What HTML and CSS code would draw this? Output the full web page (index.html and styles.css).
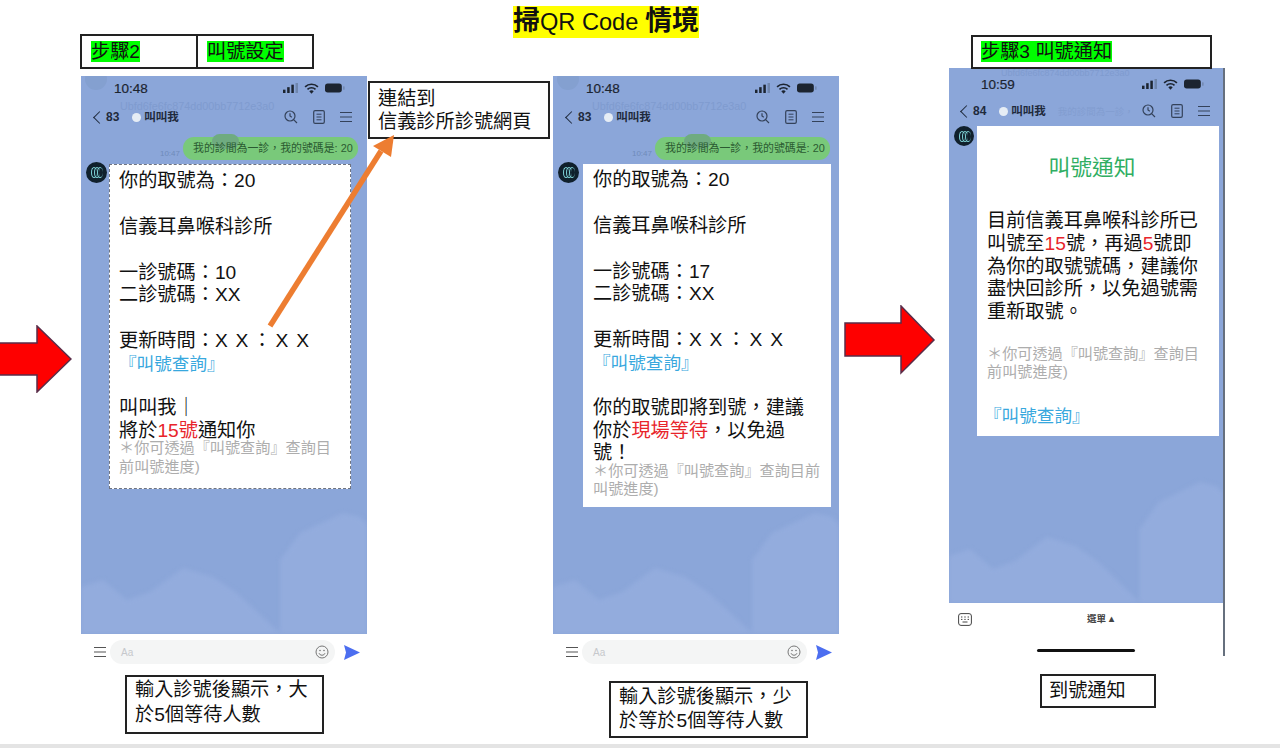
FILE: index.html
```html
<!DOCTYPE html>
<html lang="zh-Hant">
<head>
  <meta charset="UTF-8">
  <meta name="viewport" content="width=device-width, initial-scale=1.0">
  <title>掃QR Code 情境</title>
  <link rel="stylesheet" href="styles.css">
</head>
<body>
  <svg class="icon-defs" aria-hidden="true">
    <symbol id="signal" viewBox="0 0 18 12"><rect x="0" y="8" width="3" height="4" fill="#1c2430"/><rect x="5" y="5" width="3" height="7" fill="#1c2430"/><rect x="10" y="2" width="3" height="10" fill="#1c2430"/><rect x="15" y="0" width="3" height="12" fill="#6f86ad"/></symbol>
    <symbol id="wifi" viewBox="0 0 16 12"><path d="M1 4.2a10 10 0 0 1 14 0M3.6 6.9a6.4 6.4 0 0 1 8.8 0" fill="none" stroke="#1c2430" stroke-width="1.8"/><path d="M8 11.6 5.6 9a3.4 3.4 0 0 1 4.8 0z" fill="#1c2430"/></symbol>
    <symbol id="battery" viewBox="0 0 22 11"><rect x="0" y="0.5" width="18.5" height="10" rx="3" fill="#1c2430"/><rect x="20" y="3.5" width="1.5" height="4" rx="0.7" fill="#6f86ad"/></symbol>
    <symbol id="search" viewBox="0 0 14 14"><circle cx="6" cy="6" r="5" fill="none" stroke="#34425a" stroke-width="1.2"/><path d="M9.6 9.6 13 13M6 3.2V6l1.8 1.2" fill="none" stroke="#34425a" stroke-width="1.2"/></symbol>
    <symbol id="note" viewBox="0 0 12 14"><rect x="0.7" y="0.7" width="10.6" height="12.6" rx="1.4" fill="none" stroke="#34425a" stroke-width="1.2"/><path d="M3.5 4.2h5M3.5 7h5M3.5 9.8h5" stroke="#34425a" stroke-width="1"/></symbol>
    <symbol id="menu" viewBox="0 0 12 12"><path d="M0 1.5h12M0 6h12M0 10.5h12" stroke="#34425a" stroke-width="1.1"/></symbol>
    <symbol id="menu-dark" viewBox="0 0 12 12"><path d="M0 1.5h12M0 6h12M0 10.5h12" stroke="#555" stroke-width="1.2"/></symbol>
    <symbol id="smile" viewBox="0 0 14 14"><circle cx="7" cy="7" r="6" fill="none" stroke="#777" stroke-width="1"/><circle cx="5" cy="5.5" r="0.8" fill="#777"/><circle cx="9" cy="5.5" r="0.8" fill="#777"/><path d="M4 8.2a3.2 3.2 0 0 0 6 0" fill="none" stroke="#777"/></symbol>
    <symbol id="send" viewBox="0 0 16 15"><path d="M0 0 16 7.5 0 15l2-7.5z" fill="#4c6ef0"/></symbol>
    <symbol id="keyboard" viewBox="0 0 14 13"><rect x="0.6" y="0.6" width="12.8" height="11.8" rx="2.4" fill="none" stroke="#444" stroke-width="1"/><path d="M3 4h1.4M6.3 4h1.4M9.6 4H11M3 6.4h1.4M6.3 6.4h1.4M9.6 6.4H11M4.5 9h5" stroke="#444"/></symbol>
    <symbol id="clouds" viewBox="0 0 286 200" preserveAspectRatio="none"><path d="M0 153 22 146 46 166 69 158 102 134 132 143 156 159 200 200H0z" fill="#93acdd"/><path d="M199 126 219 99 262 79 279 83 286 90V200H199z" fill="#93acdd"/></symbol>
  </svg>

  <main class="slide">
    <h1 class="slide-title"><mark class="mark-yellow"><b>掃</b><span class="title-latin">QR Code </span><b>情境</b></mark></h1>

    <div class="step-table">
      <div class="step-cell"><mark class="mark-green">步驟2</mark></div>
      <div class="step-cell"><mark class="mark-green">叫號設定</mark></div>
    </div>

    <!-- 手機 1 -->
    <section class="phone phone-a">
      <div class="screen">
        <svg class="cloud-bg"><use href="#clouds"/></svg>
        <span class="ghost-dot"></span>
        <span class="ghost-id">Ubfd6fe6fc874dd00bb7712e3a0</span>
        <div class="status">
          <span class="clock">10:48</span>
          <span class="status-icons">
            <svg class="ic-signal"><use href="#signal"/></svg>
            <svg class="ic-wifi"><use href="#wifi"/></svg>
            <svg class="ic-battery"><use href="#battery"/></svg>
          </span>
        </div>
        <div class="nav">
          <span class="back"><i class="chev"></i>83</span>
          <span class="room-dot"></span>
          <span class="room">叫叫我</span>
          <span class="nav-icons">
            <svg class="ic-search"><use href="#search"/></svg>
            <svg class="ic-note"><use href="#note"/></svg>
            <svg class="ic-menu"><use href="#menu"/></svg>
          </span>
        </div>
        <div class="bubble-row">
          <span class="sent-time">10:47</span>
          <span class="bubble"><i class="bubble-ghost"></i>我的診間為一診，我的號碼是: 20</span>
        </div>
        <div class="chat-row">
          <span class="avatar"><i></i><i></i><i></i></span>
          <div class="card card-dashed">
            <p>你的取號為：20</p>
            <p>信義耳鼻喉科診所</p>
            <p>一診號碼：10<br>二診號碼：XX</p>
            <p>更新時間：<span class="time-blank">X X<span class="time-colon">：</span>X X</span><br><span class="link">『叫號查詢』</span></p>
            <p class="tight">叫叫我｜<br>將於<span class="red">15號</span>通知你</p>
            <p class="note-text">＊你可透過『叫號查詢』查詢目前叫號進度)</p>
          </div>
        </div>
      </div>
      <div class="inputbar">
        <svg class="ic-hamburger"><use href="#menu-dark"/></svg>
        <div class="input-pill"><span>Aa</span><svg class="ic-smile"><use href="#smile"/></svg></div>
        <svg class="ic-send"><use href="#send"/></svg>
      </div>
    </section>

    <!-- 手機 2 -->
    <section class="phone phone-b">
      <div class="screen">
        <svg class="cloud-bg"><use href="#clouds"/></svg>
        <span class="ghost-dot"></span>
        <span class="ghost-id">Ubfd6fe6fc874dd00bb7712e3a0</span>
        <div class="status">
          <span class="clock">10:48</span>
          <span class="status-icons">
            <svg class="ic-signal"><use href="#signal"/></svg>
            <svg class="ic-wifi"><use href="#wifi"/></svg>
            <svg class="ic-battery"><use href="#battery"/></svg>
          </span>
        </div>
        <div class="nav">
          <span class="back"><i class="chev"></i>83</span>
          <span class="room-dot"></span>
          <span class="room">叫叫我</span>
          <span class="nav-icons">
            <svg class="ic-search"><use href="#search"/></svg>
            <svg class="ic-note"><use href="#note"/></svg>
            <svg class="ic-menu"><use href="#menu"/></svg>
          </span>
        </div>
        <div class="bubble-row">
          <span class="sent-time">10:47</span>
          <span class="bubble"><i class="bubble-ghost"></i>我的診間為一診，我的號碼是: 20</span>
        </div>
        <div class="chat-row">
          <span class="avatar"><i></i><i></i><i></i></span>
          <div class="card card-wide">
            <p>你的取號為：20</p>
            <p>信義耳鼻喉科診所</p>
            <p>一診號碼：17<br>二診號碼：XX</p>
            <p>更新時間：<span class="time-blank">X X<span class="time-colon">：</span>X X</span><br><span class="link">『叫號查詢』</span></p>
            <p class="tight">你的取號即將到號，建議<br>你於<span class="red">現場等待</span>，以免過<br>號！</p>
            <p class="note-text">＊你可透過『叫號查詢』查詢目前叫號進度)</p>
          </div>
        </div>
      </div>
      <div class="inputbar">
        <svg class="ic-hamburger"><use href="#menu-dark"/></svg>
        <div class="input-pill"><span>Aa</span><svg class="ic-smile"><use href="#smile"/></svg></div>
        <svg class="ic-send"><use href="#send"/></svg>
      </div>
    </section>

    <!-- 手機 3 -->
    <section class="phone phone-c">
      <div class="screen">
        <svg class="cloud-bg"><use href="#clouds"/></svg>
        <span class="ghost-id ghost-id-top">Ubfd6fe6fc874dd00bb7712e3a0</span>
        <div class="status">
          <span class="clock">10:59</span>
          <span class="status-icons">
            <svg class="ic-signal"><use href="#signal"/></svg>
            <svg class="ic-wifi"><use href="#wifi"/></svg>
            <svg class="ic-battery"><use href="#battery"/></svg>
          </span>
        </div>
        <div class="nav">
          <span class="back"><i class="chev"></i>84</span>
          <span class="room-dot"></span>
          <span class="room">叫叫我</span>
          <span class="ghost-nav">我的診間為一診，</span>
          <span class="nav-icons">
            <svg class="ic-search"><use href="#search"/></svg>
            <svg class="ic-note"><use href="#note"/></svg>
            <svg class="ic-menu"><use href="#menu"/></svg>
          </span>
        </div>
        <div class="chat-row">
          <span class="avatar"><i></i><i></i><i></i></span>
          <div class="card card-notice">
            <h2 class="notice-title">叫號通知</h2>
            <p class="notice-body">目前信義耳鼻喉科診所已<br>叫號至<span class="red">15</span>號，再過<span class="red">5</span>號即<br>為你的取號號碼，建議你<br>盡快回診所，以免過號需<br>重新取號。</p>
            <p class="note-text">＊你可透過『叫號查詢』查詢目前叫號進度)</p>
            <p class="link notice-link">『叫號查詢』</p>
          </div>
        </div>
      </div>
      <div class="menubar">
        <svg class="ic-keyboard"><use href="#keyboard"/></svg>
        <span class="menu-label">選單 ▴</span>
      </div>
      <div class="homebar"></div>
    </section>

    <div class="tag tag-link">連結到<br>信義診所診號網頁</div>
    <div class="tag tag-more">輸入診號後顯示，大<br>於5個等待人數</div>
    <div class="tag tag-less">輸入診號後顯示，少<br>於等於5個等待人數</div>
    <div class="tag tag-arrive">到號通知</div>
    <div class="tag tag-step3"><mark class="mark-green">步驟3 叫號通知</mark></div>

    <svg class="arrow arrow-red-left" viewBox="0 0 72 68"><path d="M-3 18H37V1L71 34 37 67V50H-3z" fill="#fe0000" stroke="#5a2c48" stroke-width="1.5"/></svg>
    <svg class="arrow arrow-red-mid" viewBox="0 0 92 70"><path d="M1 18H57V1L90 35 57 68V51H1z" fill="#fe0000" stroke="#5a2c48" stroke-width="1.5"/></svg>
    <svg class="arrow arrow-orange" viewBox="0 0 130 195"><path d="M3 193 114 18" stroke="#ed7d31" stroke-width="5.5"/><path d="M127 2 124 24 106 13z" fill="#ed7d31"/></svg>

    <div class="slide-edge"></div>
  </main>
</body>
</html>
```

FILE: styles.css
```css
* {
  box-sizing: border-box;
}
body {
  margin: 0;
  background: #fff;
  color: #111;
  font-family: "Liberation Sans", "Noto Sans CJK TC", sans-serif;
  font-size: 19.2px;
  line-height: 23px;
}
mark {
  color: #111;
}
p, h1, h2 {
  margin: 0;
  font-weight: 400;
}
.icon-defs {
  position: absolute;
  width: 0;
  height: 0;
}

/* 投影片畫布 */
.slide {
  position: relative;
  width: 1280px;
  height: 748px;
  overflow: hidden;
}
.slide-edge {
  position: absolute;
  left: 0;
  right: 0;
  bottom: 0;
  height: 4px;
  background: #e4e4e4;
}
.slide-title {
  position: absolute;
  left: 513px;
  top: 6px;
  font-size: 27px;
  line-height: 31px;
  white-space: nowrap;
}
.title-latin {
  font-size: 23.6px;
}
.mark-yellow {
  display: inline-block;
  background: #ffff00;
}
.mark-green {
  background: #00ff00;
}

.step-table {
  position: absolute;
  left: 80px;
  top: 34px;
  display: flex;
  width: 234px;
  height: 35px;
  border: 2px solid #222;
}
.step-cell {
  flex: 1;
  padding: 4px 9px;
  white-space: nowrap;
}
.step-cell + .step-cell {
  border-left: 2px solid #222;
}

.tag {
  position: absolute;
  padding: 3px 8px;
  background: #fff;
  border: 2px solid #222;
  white-space: nowrap;
}
.tag-link {
  left: 368px;
  top: 81px;
  width: 182px;
  height: 58px;
  padding-top: 4px;
}
.tag-more {
  left: 125px;
  top: 675px;
  width: 199px;
  height: 59px;
  padding: 0 8px;
  line-height: 25px;
}
.tag-less {
  left: 609px;
  top: 681px;
  width: 199px;
  height: 57px;
  padding-top: 2px;
  line-height: 24px;
}
.tag-arrive {
  left: 1040px;
  top: 674px;
  width: 116px;
  height: 34px;
  padding-left: 7px;
}
.tag-step3 {
  left: 971px;
  top: 35px;
  width: 241px;
  height: 34px;
}

.arrow {
  position: absolute;
}
.arrow-red-left {
  left: 0;
  top: 325px;
  width: 72px;
  height: 68px;
}
.arrow-red-mid {
  left: 844px;
  top: 305px;
  width: 92px;
  height: 70px;
}
.arrow-orange {
  left: 267px;
  top: 133px;
  width: 130px;
  height: 195px;
}

/* 手機 */
.phone {
  position: absolute;
  width: 286px;
}
.phone-a {
  left: 81px;
  top: 76px;
}
.phone-b {
  left: 553px;
  top: 76px;
}
.phone-c {
  left: 949px;
  top: 68px;
  width: 276px;
  height: 588px;
  border-right: 2px solid #66707e;
}
.screen {
  position: relative;
  height: 558px;
  overflow: hidden;
  background: #8ba6d9;
}
.phone-c .screen {
  height: 535px;
}
.cloud-bg {
  position: absolute;
  left: 0;
  bottom: 0;
  width: 100%;
  height: 200px;
  filter: blur(2px);
}
.ghost-dot {
  position: absolute;
  left: 4px;
  top: -8px;
  width: 22px;
  height: 22px;
  border-radius: 50%;
  background: #84a0d0;
}
.ghost-id {
  position: absolute;
  left: 39px;
  top: 23px;
  color: #7f9bcf;
  font-size: 10.8px;
  line-height: 14px;
  white-space: nowrap;
}
.ghost-id-top {
  left: 52px;
  top: 0;
  font-size: 9px;
  line-height: 10px;
}
.ghost-nav {
  flex: none;
  margin-left: 12px;
  color: #829dd0;
  font-size: 9.5px;
  white-space: nowrap;
}

.status {
  position: relative;
  display: flex;
  align-items: center;
  justify-content: space-between;
  height: 24px;
  padding: 0 22px 0 33px;
}
.phone-c .status {
  margin-top: 4px;
  padding: 0 19px 0 32px;
}
.clock {
  color: #1c2430;
  font-size: 13.5px;
  -webkit-text-stroke: 0.2px #1c2430;
}
.status-icons {
  display: flex;
  align-items: center;
  gap: 6px;
}
.ic-signal {
  width: 15px;
  height: 10px;
}
.ic-wifi {
  width: 15px;
  height: 11px;
}
.ic-battery {
  width: 20px;
  height: 10px;
}

.nav {
  position: relative;
  display: flex;
  align-items: center;
  height: 26px;
  margin-top: 4px;
  padding: 0 15px 0 14px;
}
.phone-c .nav {
  margin-top: 2px;
  padding: 0 13px 0 13px;
}
.back {
  display: flex;
  flex: none;
  align-items: center;
  color: #1f2a3c;
  font-size: 12px;
  font-weight: 700;
}
.chev {
  width: 9px;
  height: 9px;
  margin-right: 2px;
  border-left: 1.3px solid #1f2a3c;
  border-bottom: 1.3px solid #1f2a3c;
  transform: rotate(45deg);
}
.room-dot {
  flex: none;
  width: 9px;
  height: 9px;
  margin: 0 3px 0 13px;
  border-radius: 50%;
  background: #e6edf5;
}
.room {
  flex: none;
  color: #1f2a3c;
  font-size: 11.5px;
  font-weight: 700;
  white-space: nowrap;
}
.nav-icons {
  display: flex;
  align-items: center;
  gap: 15px;
  margin-left: auto;
}
.ic-search {
  width: 14px;
  height: 14px;
}
.ic-note {
  width: 12px;
  height: 14px;
}
.ic-menu {
  width: 12px;
  height: 12px;
}

.bubble-row {
  position: relative;
  display: flex;
  align-items: flex-end;
  justify-content: flex-end;
  gap: 3px;
  margin-top: 7px;
  padding-right: 9px;
}
.sent-time {
  color: #6f8bb9;
  font-size: 8px;
  line-height: 12px;
}
.bubble {
  position: relative;
  isolation: isolate;
  width: 175px;
  height: 23px;
  padding-left: 10px;
  border-radius: 11px;
  background: #79c97a;
  color: #2b5b31;
  font-size: 10.9px;
  line-height: 23px;
  white-space: nowrap;
}
.bubble-ghost {
  position: absolute;
  left: 29px;
  top: -3px;
  z-index: -1;
  width: 27px;
  height: 15px;
  border-radius: 9px;
  background: #6fab80;
}

.chat-row {
  position: relative;
  display: flex;
  align-items: flex-start;
  margin-top: 4px;
  padding-left: 5px;
}
.phone-c .chat-row {
  margin-top: 2px;
}
.avatar {
  position: relative;
  flex: none;
  width: 21px;
  height: 21px;
  margin-top: -2px;
  margin-right: 2px;
  border-radius: 50%;
  background: #10202c;
}
.phone-c .avatar {
  width: 20px;
  height: 20px;
  margin-top: 0;
  margin-right: 3px;
}
.avatar i {
  position: absolute;
  top: 5px;
  width: 6px;
  height: 11px;
  border: 1px solid #7fd4d8;
  border-right: 0;
  border-radius: 50%;
}
.avatar i:nth-child(1) {
  left: 5px;
}
.avatar i:nth-child(2) {
  left: 8px;
}
.avatar i:nth-child(3) {
  left: 11px;
}

.card {
  flex: none;
  width: 242px;
  padding: 5px 10px 14px;
  background: #fff;
  color: #111;
}
.card p {
  margin-bottom: 23px;
  line-height: 22.8px;
}
.card .tight {
  margin-top: -1px;
  margin-bottom: 0;
}
.card .note-text {
  margin-top: -3px;
  margin-bottom: 0;
  color: #adadad;
  font-size: 15.15px;
  line-height: 18.2px;
}
.time-blank {
  word-spacing: 2.5px;
}
.time-colon {
  margin: 0 4px;
}
.link {
  color: #38a8de;
  font-size: 17.6px;
}
.red {
  color: #e8252b;
}
.card-dashed {
  height: 325px;
  padding-left: 9px;
  padding-right: 7px;
  border: 1px dashed #6f7480;
}
.card-dashed .tight {
  margin-top: -2px;
}
.card-wide {
  width: 248px;
  height: 343px;
  margin-left: 2px;
}
.card-notice {
  width: 242px;
  height: 310px;
  padding: 28px 10px 0;
}
.notice-title {
  margin-bottom: 29px;
  padding-right: 12px;
  color: #2fae62;
  font-size: 21.7px;
  line-height: 27px;
  text-align: center;
}
.card .notice-body {
  margin-bottom: 21px;
}
.card-notice .note-text {
  margin-top: 0;
}
.card .notice-link {
  margin: 24px 0 0 -3px;
  font-size: 17.6px;
}

.inputbar {
  display: flex;
  align-items: center;
  height: 36px;
  padding: 0 7px 0 13px;
  background: #fff;
}
.ic-hamburger {
  flex: none;
  width: 12px;
  height: 12px;
}
.input-pill {
  display: flex;
  flex: none;
  align-items: center;
  justify-content: space-between;
  width: 225px;
  height: 24px;
  margin: 0 9px 0 4px;
  padding: 0 6px 0 11px;
  border-radius: 12px;
  background: #f4f5f5;
  color: #c6c8cc;
  font-size: 10px;
}
.ic-smile {
  width: 14px;
  height: 14px;
}
.ic-send {
  flex: none;
  width: 16px;
  height: 15px;
}

.menubar {
  display: flex;
  align-items: center;
  position: relative;
  height: 32px;
  padding-left: 9px;
}
.ic-keyboard {
  width: 14px;
  height: 13px;
}
.menu-label {
  position: absolute;
  left: 138px;
  top: 9px;
  color: #444;
  font-size: 9.5px;
  font-weight: 700;
  line-height: 14px;
}
.homebar {
  width: 98px;
  height: 3px;
  margin: 14px 0 0 88px;
  border-radius: 2px;
  background: #111;
}
```
